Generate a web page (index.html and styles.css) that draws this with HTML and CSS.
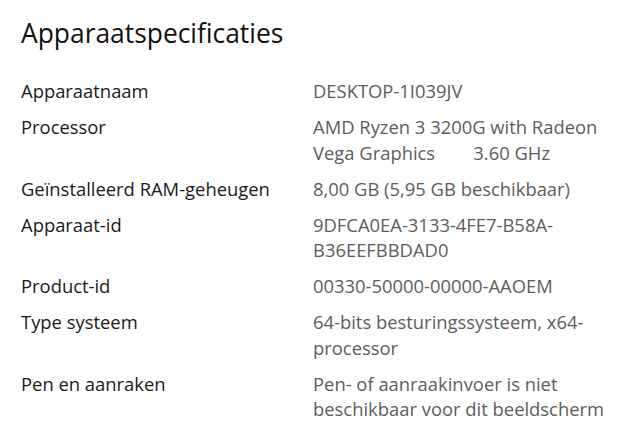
FILE: index.html
```html
<!DOCTYPE html>
<html lang="nl">
<head>
<meta charset="utf-8">
<title>Apparaatspecificaties</title>
<link rel="stylesheet" href="styles.css">
</head>
<body>
<main class="page">
  <h1 class="title">Apparaatspecificaties</h1>
  <dl class="specs">
    <div class="row"><dt class="label">Apparaatnaam</dt><dd class="value">DESKTOP-1I039JV</dd></div>
    <div class="row"><dt class="label">Processor</dt><dd class="value">AMD Ryzen 3 3200G with Radeon Vega Graphics&nbsp;&nbsp;&nbsp;&nbsp;&nbsp;&nbsp;&nbsp;&nbsp;3.60 GHz</dd></div>
    <div class="row"><dt class="label">Geïnstalleerd RAM-geheugen</dt><dd class="value">8,00 GB (5,95 GB beschikbaar)</dd></div>
    <div class="row"><dt class="label">Apparaat-id</dt><dd class="value">9DFCA0EA-3133-4FE7-B58A-B36EEFBBDAD0</dd></div>
    <div class="row"><dt class="label">Product-id</dt><dd class="value">00330-50000-00000-AAOEM</dd></div>
    <div class="row"><dt class="label">Type systeem</dt><dd class="value">64-bits besturingssysteem, x64-processor</dd></div>
    <div class="row"><dt class="label">Pen en aanraken</dt><dd class="value">Pen- of aanraakinvoer is niet beschikbaar voor dit beeldscherm</dd></div>
  </dl>
</main>
</body>
</html>
```
FILE: styles.css
```css
html, body {
  margin: 0;
  padding: 0;
  background: #ffffff;
}
.page {
  padding: 14px 0 0 21px;
  font-family: "Open Sans", "Noto Sans", "Liberation Sans", sans-serif;
}
.title {
  margin: 0;
  font-size: 26.4px;
  font-weight: 400;
  line-height: 38px;
  color: #111111;
}
.specs {
  margin: 26px 0 0 0;
  display: flex;
  flex-direction: column;
  gap: 10.5px;
}
.row {
  display: grid;
  grid-template-columns: 292px 305px;
}
.label {
  margin: 0;
  font-size: 18.4px;
  line-height: 25.5px;
  color: #1a1a1a;
}
.value {
  margin: 0;
  font-size: 18.4px;
  line-height: 25.5px;
  color: #5d5d5d;
}
```
